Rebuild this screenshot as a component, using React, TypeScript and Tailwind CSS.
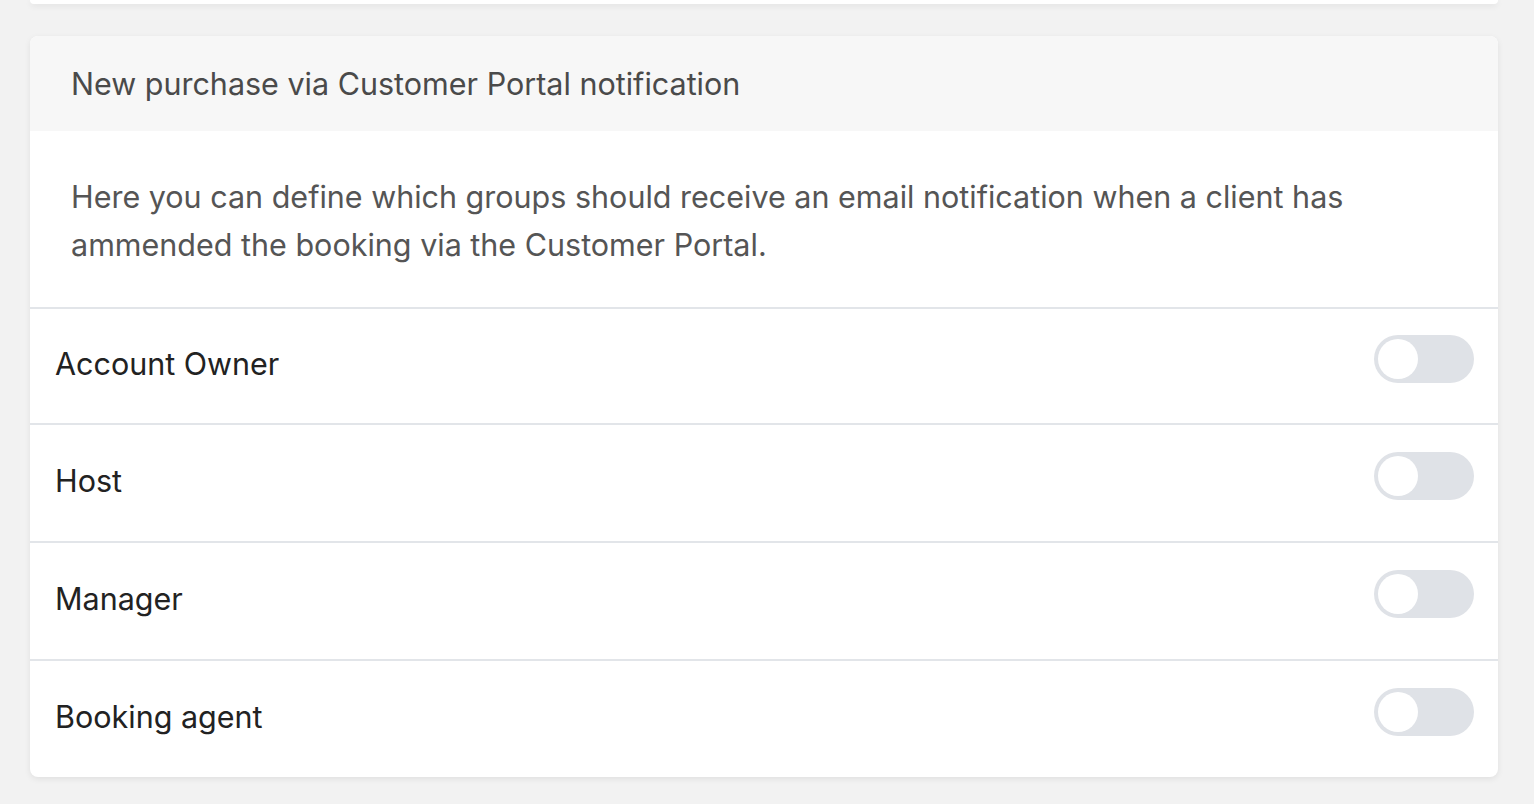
import React from 'react';

const groups = ['Account Owner', 'Host', 'Manager', 'Booking agent'];

function Toggle() {
  return (
    <div className="mb-[15px] flex h-[48px] w-[100px] items-center rounded-full bg-[#dfe2e7] p-[4px]">
      <div className="h-[40px] w-[40px] rounded-full bg-white" />
    </div>
  );
}

export default function App() {
  return (
    <div
      className="min-h-screen bg-[#f2f2f2] pl-[30px] pr-[36px]"
      style={{ fontFamily: 'Inter, "Noto Sans", sans-serif' }}
    >
      <div className="h-[4px] rounded-b-lg bg-white shadow-[0_2px_6px_rgba(0,0,0,0.08)]" />

      <div className="mt-[32px] overflow-hidden rounded-lg bg-white shadow-[0_2px_6px_rgba(0,0,0,0.08)]">
        <div className="flex h-[95px] items-center bg-[#f7f7f7] px-[41px]">
          <h2 className="text-[30.5px] text-[#4a4a4a]">
            New purchase via Customer Portal notification
          </h2>
        </div>

        <div className="px-[41px] pt-[42px] pb-[38px]">
          <p className="text-[30.5px] leading-[48px] text-[#555]">
            Here you can define which groups should receive an email notification when a client has
            <br />
            ammended the booking via the Customer Portal.
          </p>
        </div>

        <ul>
          {groups.map((g, i) => (
            <li
              key={g}
              className={`flex items-center justify-between border-t-2 border-[#e2e5e9] pl-[25px] pr-[24px] ${
                i === 0 ? 'h-[116px]' : 'h-[118px]'
              }`}
            >
              <span className="mb-[4px] text-[30.5px] text-[#222]">{g}</span>
              <Toggle />
            </li>
          ))}
        </ul>
      </div>
    </div>
  );
}
